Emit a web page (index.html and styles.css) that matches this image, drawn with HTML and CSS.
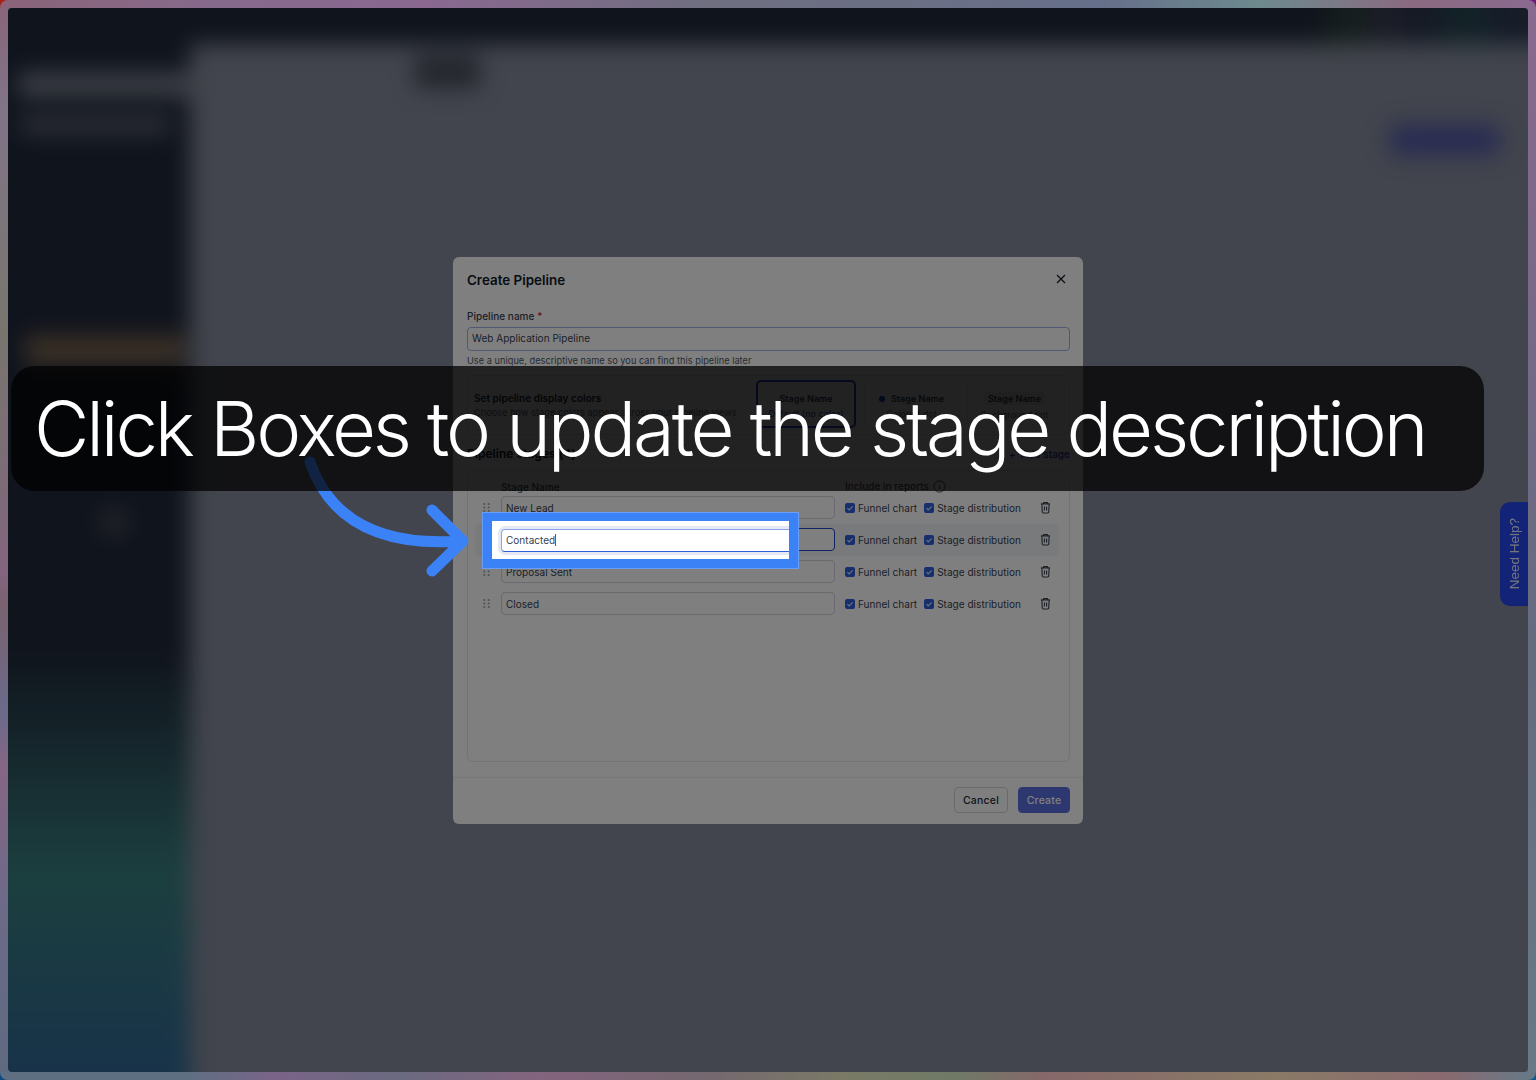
FILE: index.html
```html
<!DOCTYPE html>
<html lang="en">
<head>
    <meta charset="UTF-8">
    <meta name="viewport" content="width=device-width, initial-scale=1.0">
    <title>Create Pipeline</title>
    <link rel="stylesheet" href="styles.css">
</head>
<body>
<div class="frame">
    <div class="app">
        <!-- blurred page behind the modal -->
        <div class="page">
            <div class="topbar"></div>
            <div class="page-body">
                <div class="sidebar">
                    <div class="side-bar side-logo"></div>
                    <div class="side-bar side-search"></div>
                    <div class="side-bar side-active"></div>
                    <div class="side-bar side-dot"></div>
                </div>
                <div class="main">
                    <div class="main-tab"></div>
                    <div class="main-button"></div>
                </div>
            </div>
        </div>

        <div class="help-tab"><span>Need Help?</span></div>

        <div class="modal-wrap">
            <div class="modal">
                <div class="modal-head">
                    <h2 class="modal-title">Create Pipeline</h2>
                    <svg class="close-icon" viewBox="0 0 12 12"><path d="M2 2l8 8M10 2l-8 8"/></svg>
                </div>

                <label class="field-label">Pipeline name <span class="req">*</span></label>
                <input class="name-input" type="text" value="Web Application Pipeline">
                <p class="field-help">Use a unique, descriptive name so you can find this pipeline later</p>

                <div class="colors-panel">
                    <div class="colors-text">
                        <div class="colors-title">Set pipeline display colors</div>
                        <div class="colors-sub">Choose how stage colors appear across your pipeline views</div>
                    </div>
                    <div class="color-card selected">
                        <div class="card-name">Stage Name</div>
                        <div class="card-sub card-sub-blue">Default (no color)</div>
                    </div>
                    <div class="color-card">
                        <div class="card-name"><i class="card-dot"></i>Stage Name</div>
                        <div class="card-sub">Colored dot</div>
                    </div>
                    <div class="color-card">
                        <div class="card-name card-chip">Stage Name</div>
                        <div class="card-sub">Background tint</div>
                    </div>
                </div>

                <div class="stages-head">
                    <div class="stages-title">Pipeline stages (4)</div>
                    <div class="add-stage">+ &nbsp;Add stage</div>
                </div>

                <div class="stages-panel">
                    <div class="stage-labels">
                        <span class="label-name">Stage Name</span>
                        <span class="label-reports">Include in reports
                            <svg class="info-icon" viewBox="0 0 14 14"><circle cx="7" cy="7" r="6"/><path d="M7 6.4v3.4M7 4.2v.6"/></svg>
                        </span>
                    </div>

                    <div class="stage-row">
                        <svg class="drag-icon" viewBox="0 0 8 12"><circle cx="1.5" cy="2" r="1.2"/><circle cx="6.5" cy="2" r="1.2"/><circle cx="1.5" cy="6" r="1.2"/><circle cx="6.5" cy="6" r="1.2"/><circle cx="1.5" cy="10" r="1.2"/><circle cx="6.5" cy="10" r="1.2"/></svg>
                        <input class="stage-input" type="text" value="New Lead">
                        <span class="check"><svg viewBox="0 0 10 10"><path d="M2.4 5.2l1.8 1.7 3.4-3.6"/></svg></span><span class="check-text">Funnel chart</span>
                        <span class="check"><svg viewBox="0 0 10 10"><path d="M2.4 5.2l1.8 1.7 3.4-3.6"/></svg></span><span class="check-text">Stage distribution</span>
                        <svg class="trash-icon" viewBox="0 0 12 14"><path d="M1 3h10M4 3V1.6h4V3M2 3l.5 9a1 1 0 0 0 1 1h5a1 1 0 0 0 1-1L10 3M4.8 5.8v4.6M7.2 5.8v4.6"/></svg>
                    </div>
                    <div class="stage-row hovered">
                        <svg class="drag-icon" viewBox="0 0 8 12"><circle cx="1.5" cy="2" r="1.2"/><circle cx="6.5" cy="2" r="1.2"/><circle cx="1.5" cy="6" r="1.2"/><circle cx="6.5" cy="6" r="1.2"/><circle cx="1.5" cy="10" r="1.2"/><circle cx="6.5" cy="10" r="1.2"/></svg>
                        <input class="stage-input focused" type="text" value="Contacted">
                        <span class="check"><svg viewBox="0 0 10 10"><path d="M2.4 5.2l1.8 1.7 3.4-3.6"/></svg></span><span class="check-text">Funnel chart</span>
                        <span class="check"><svg viewBox="0 0 10 10"><path d="M2.4 5.2l1.8 1.7 3.4-3.6"/></svg></span><span class="check-text">Stage distribution</span>
                        <svg class="trash-icon" viewBox="0 0 12 14"><path d="M1 3h10M4 3V1.6h4V3M2 3l.5 9a1 1 0 0 0 1 1h5a1 1 0 0 0 1-1L10 3M4.8 5.8v4.6M7.2 5.8v4.6"/></svg>
                    </div>
                    <div class="stage-row">
                        <svg class="drag-icon" viewBox="0 0 8 12"><circle cx="1.5" cy="2" r="1.2"/><circle cx="6.5" cy="2" r="1.2"/><circle cx="1.5" cy="6" r="1.2"/><circle cx="6.5" cy="6" r="1.2"/><circle cx="1.5" cy="10" r="1.2"/><circle cx="6.5" cy="10" r="1.2"/></svg>
                        <input class="stage-input" type="text" value="Proposal Sent">
                        <span class="check"><svg viewBox="0 0 10 10"><path d="M2.4 5.2l1.8 1.7 3.4-3.6"/></svg></span><span class="check-text">Funnel chart</span>
                        <span class="check"><svg viewBox="0 0 10 10"><path d="M2.4 5.2l1.8 1.7 3.4-3.6"/></svg></span><span class="check-text">Stage distribution</span>
                        <svg class="trash-icon" viewBox="0 0 12 14"><path d="M1 3h10M4 3V1.6h4V3M2 3l.5 9a1 1 0 0 0 1 1h5a1 1 0 0 0 1-1L10 3M4.8 5.8v4.6M7.2 5.8v4.6"/></svg>
                    </div>
                    <div class="stage-row">
                        <svg class="drag-icon" viewBox="0 0 8 12"><circle cx="1.5" cy="2" r="1.2"/><circle cx="6.5" cy="2" r="1.2"/><circle cx="1.5" cy="6" r="1.2"/><circle cx="6.5" cy="6" r="1.2"/><circle cx="1.5" cy="10" r="1.2"/><circle cx="6.5" cy="10" r="1.2"/></svg>
                        <input class="stage-input" type="text" value="Closed">
                        <span class="check"><svg viewBox="0 0 10 10"><path d="M2.4 5.2l1.8 1.7 3.4-3.6"/></svg></span><span class="check-text">Funnel chart</span>
                        <span class="check"><svg viewBox="0 0 10 10"><path d="M2.4 5.2l1.8 1.7 3.4-3.6"/></svg></span><span class="check-text">Stage distribution</span>
                        <svg class="trash-icon" viewBox="0 0 12 14"><path d="M1 3h10M4 3V1.6h4V3M2 3l.5 9a1 1 0 0 0 1 1h5a1 1 0 0 0 1-1L10 3M4.8 5.8v4.6M7.2 5.8v4.6"/></svg>
                    </div>
                </div>

                <div class="modal-foot">
                    <button class="btn btn-cancel">Cancel</button>
                    <button class="btn btn-create">Create</button>
                </div>
            </div>
        </div>

        <div class="dim"></div>
    </div>
</div>

<!-- tutorial layer: arrow, spotlight, caption -->
<svg class="arrow" viewBox="0 0 1536 1080">
    <path d="M310 462C330 520 380 547 462 541M432 510l31 31-31 30"/>
</svg>
<div class="spotlight">
    <div class="spot-inner">
        <div class="spot-input">Contacted<i class="caret"></i></div>
    </div>
</div>
<div class="caption">Click Boxes to update the stage description</div>
</body>
</html>
```
FILE: styles.css
```css
* {
    box-sizing: border-box;
}

body {
    margin: 0;
    width: 1536px;
    height: 1080px;
    overflow: hidden;
    position: relative;
    font-family: "Inter", "Liberation Sans", sans-serif;
    background:
        radial-gradient(circle at 0 0, #a82014 10px, transparent 11px),
        radial-gradient(circle at 100% 0, #6a1a80 10px, transparent 11px),
        radial-gradient(circle at 0 100%, #0c4a80 10px, transparent 11px),
        radial-gradient(circle at 100% 100%, #0c5a90 10px, transparent 11px),
        #6c6c80;
}

.frame {
    height: 100%;
    padding: 8px;
    border-radius: 8px;
    background:
        linear-gradient(90deg, #8a6478, #866a8c 14%, #8a6890 28%, #6f6f80 46%, #66708a 72%, #6d8a8e 82%, #8a6a80 92%, #8a6a90) top / 100% 8px no-repeat,
        linear-gradient(90deg, #5f6f82, #5f6f82 12%, #7a6488 18%, #6a6a80 26%, #84647f 35%, #75686f 46%, #7a7a66 55%, #6f7a66 62%, #86686a 68%, #8a7a66 83%, #8a6a70 94%, #647a88) bottom / 100% 8px no-repeat,
        linear-gradient(180deg, #8a6478, #807488 10%, #78766e 30%, #7d6a78 46%, #84647f 53%, #7a6270 56%, #6a6a8a 66%, #866684 71%, #6e6a88 83%, #5e6a80) left / 8px 100% no-repeat,
        linear-gradient(180deg, #8a6a90, #7a6a88 25%, #646c80 60%, #687a85) right / 8px 100% no-repeat;
}

.app {
    position: relative;
    height: 100%;
    overflow: hidden;
    border-radius: 4px;
    background: #848a9a;
}

/* page behind the modal, it is only seen blurred */
.page {
    margin: -36px;
    height: calc(100% + 72px);
    filter: blur(11px);
    display: flex;
    flex-direction: column;
}

.topbar {
    height: 72px;
    flex: none;
    background: linear-gradient(90deg, #20283a 0, #20283a 84.5%, #2a4038 86%, #2a3c3c 87%, #3a3a50 88.5%, #2a3248 91%, #244850 94%, #2c3850 96%);
}

.page-body {
    flex: 1;
    display: flex;
}

.sidebar {
    width: 218px;
    flex: none;
    overflow: hidden;
    background: linear-gradient(180deg, #20283a 0, #20283a 57%, #387e7e 78%, #2e6296 100%);
}

.side-bar {
    border-radius: 4px;
}

.side-logo {
    margin: 28px 0 0 46px;
    width: 172px;
    height: 25px;
    background: #767c8a;
}

.side-search {
    margin: 18px 0 0 48px;
    width: 150px;
    height: 20px;
    background: #565c6a;
}

.side-active {
    margin: 200px 0 0 53px;
    width: 160px;
    height: 30px;
    background: #74604c;
}

.side-dot {
    margin: 145px 0 0 128px;
    width: 28px;
    height: 25px;
    background: #4c4e54;
    border-radius: 50%;
}

.main {
    flex: 1;
    display: flex;
    flex-direction: column;
}

.main-tab {
    margin: 11px 0 0 225px;
    width: 65px;
    height: 33px;
    background: #464c5a;
}

.main-button {
    margin: 37px 64px 0 0;
    align-self: flex-end;
    width: 110px;
    height: 30px;
    background: #5056a4;
    border-radius: 6px;
}

.help-tab {
    position: absolute;
    right: 0;
    top: 494px;
    width: 28px;
    height: 104px;
    border-radius: 10px 0 0 10px;
    background: #2446f0;
    color: #fff;
    font: 13.5px "Liberation Sans", sans-serif;
    display: flex;
    align-items: center;
    justify-content: center;
}

.help-tab span {
    writing-mode: vertical-rl;
    transform: rotate(180deg);
    opacity: .9;
}

/* modal */
.modal-wrap {
    position: absolute;
    inset: 0;
    display: flex;
    align-items: center;
    justify-content: center;
}

.modal {
    width: 630px;
    height: 567px;
    padding: 14px 13px 11px 14px;
    background: #fff;
    border-radius: 6px;
    display: flex;
    flex-direction: column;
    color: #1f2937;
    font-size: 10px;
    letter-spacing: .03px;
    white-space: nowrap;
}

.modal-head {
    height: 18px;
    display: flex;
    align-items: center;
    justify-content: space-between;
}

.modal-title {
    margin: 0;
    font-size: 13.4px;
    font-weight: 600;
    letter-spacing: 0;
    color: #111827;
}

.close-icon {
    width: 12px;
    height: 12px;
    margin: -2px 3px 0 0;
    fill: none;
    stroke: #111827;
    stroke-width: 1.2;
}

.field-label {
    margin-top: 21px;
    line-height: 13px;
    font-weight: 500;
    color: #374151;
}

.req {
    color: #dc2626;
}

.name-input {
    margin-top: 4px;
    height: 24px;
    width: 100%;
    padding: 0 4px 1px;
    border: 1px solid #a5b0e8;
    border-radius: 4px;
    font: inherit;
    letter-spacing: inherit;
    color: #374151;
    background: #fff;
}

.field-help {
    margin: 3px 0 0;
    line-height: 13px;
    font-size: 9.2px;
    color: #4b5563;
}

.colors-panel {
    margin-top: 8px;
    height: 60px;
    padding: 4px 7px 0 6px;
    border: 1px solid #e5e7eb;
    border-radius: 6px;
    display: flex;
    gap: 8px;
}

.colors-text {
    flex: 1;
    padding-top: 12px;
}

.colors-title {
    font-weight: 600;
    color: #1f2937;
}

.colors-sub {
    margin-top: 3px;
    font-size: 9.2px;
    color: #6b7280;
}

.color-card {
    width: 95px;
    height: 48px;
    padding-top: 12px;
    border: 1px solid #eceef2;
    border-radius: 5px;
    text-align: center;
    font-size: 9px;
}

.color-card.selected {
    width: 100px;
    border: 2px solid #2446c8;
    padding-top: 11px;
}

.card-name {
    font-weight: 600;
    color: #374151;
}

.card-chip {
    display: inline-block;
    padding: 1px 4px;
    margin-top: -1px;
    background: #eef0f4;
    border-radius: 3px;
}

.card-dot {
    display: inline-block;
    width: 6px;
    height: 6px;
    margin-right: 6px;
    border-radius: 50%;
    background: #2446c8;
}

.card-sub {
    margin-top: 4px;
    color: #6b7280;
}

.card-sub-blue {
    color: #2446c8;
}

.stages-head {
    margin-top: 11px;
    height: 16px;
    display: flex;
    align-items: center;
    justify-content: space-between;
}

.stages-title {
    font-size: 12px;
    font-weight: 600;
    color: #111827;
}

.add-stage {
    color: #2446c8;
    font-weight: 500;
}

.stages-panel {
    flex: 1;
    margin-top: 8px;
    padding: 10px 10px 0 7px;
    border: 1px solid #e5e7eb;
    border-radius: 6px;
}

.stage-labels {
    height: 12px;
    line-height: 13px;
    display: flex;
    color: #4b5563;
    font-weight: 500;
}

.label-name {
    margin-left: 26px;
    width: 344px;
}

.label-reports {
    display: flex;
    align-items: center;
    gap: 4px;
}

.info-icon {
    width: 13px;
    height: 13px;
    fill: none;
    stroke: #374151;
    stroke-width: 1;
}

.stage-row {
    height: 32px;
    padding-left: 8px;
    display: flex;
    align-items: center;
    border-radius: 4px;
}

.stage-labels + .stage-row {
    margin-top: -1px;
}

.stage-row.hovered {
    background: #f3f4f6;
}

.drag-icon {
    width: 7px;
    height: 11px;
    margin-right: 11px;
    flex: none;
    fill: #9ca3af;
}

.stage-input {
    width: 334px;
    height: 23px;
    margin-right: 10px;
    padding: 0 4px;
    flex: none;
    border: 1px solid #d1d5db;
    border-radius: 4px;
    font: inherit;
    letter-spacing: inherit;
    color: #374151;
    background: #fff;
}

.stage-input.focused {
    border-color: #2446c8;
}

.check {
    width: 10px;
    height: 10px;
    margin-right: 3px;
    border-radius: 2px;
    background: #2f5fd8;
    flex: none;
}

.check svg {
    display: block;
    width: 10px;
    height: 10px;
    fill: none;
    stroke: #dbe4fb;
    stroke-width: 1.1;
}

.check-text {
    margin-right: 7px;
    color: #374151;
}

.trash-icon {
    width: 11px;
    height: 13px;
    margin-left: 12px;
    flex: none;
    fill: none;
    stroke: #374151;
    stroke-width: 1.2;
}

.modal-foot {
    margin: 15px -13px 0 -14px;
    padding: 9px 13px 0 0;
    border-top: 1px solid #eceef2;
    display: flex;
    justify-content: flex-end;
    gap: 10px;
}

.btn {
    height: 26px;
    padding: 1px 0 0;
    border-radius: 4px;
    font: 500 10.5px "Inter", "Liberation Sans", sans-serif;
    letter-spacing: .2px;
}

.btn-cancel {
    width: 54px;
    border: 1px solid #d1d5db;
    background: #fff;
    color: #1f2937;
}

.btn-create {
    width: 52px;
    border: 1px solid #5a70e0;
    background: #5a70e0;
    color: #fff;
}

.dim {
    position: absolute;
    inset: 0;
    background: rgba(0, 0, 0, .5);
}

/* tutorial layer */
.arrow {
    position: absolute;
    left: 0;
    top: 0;
    width: 1536px;
    height: 1080px;
    fill: none;
    stroke: #3b82f6;
    stroke-width: 11;
    stroke-linecap: round;
    stroke-linejoin: round;
}

.spotlight {
    position: absolute;
    left: 482px;
    top: 512px;
    width: 317px;
    height: 57px;
    border: 10px solid #3b82f6;
    border-top-width: 9px;
    outline: 1px solid #6a9df8;
    outline-offset: -1px;
    background: #fff;
}

.spot-inner {
    height: 100%;
    padding: 8px 0 0 9px;
    overflow: hidden;
}

.spot-input {
    width: 340px;
    height: 23px;
    padding: 0 4px;
    background: #fff;
    border: 1px solid #2f5fd8;
    border-top-color: #8aa4ee;
    border-left-color: #8aa4ee;
    border-radius: 4px;
    box-shadow: 0 0 0 3px #e5e9f6;
    font-size: 10px;
    letter-spacing: .03px;
    line-height: 21px;
    color: #374151;
}

.caret {
    display: inline-block;
    width: 1px;
    height: 12px;
    background: #2f5fd8;
    vertical-align: -2px;
}

.caption {
    position: absolute;
    left: 11px;
    top: 366px;
    width: 1473px;
    height: 125px;
    padding-left: 23px;
    border-radius: 24px;
    background: rgba(0, 0, 0, .73);
    color: #fff;
    font-size: 76px;
    font-weight: 300;
    letter-spacing: -3.14px;
    line-height: 124px;
    white-space: nowrap;
}
```
